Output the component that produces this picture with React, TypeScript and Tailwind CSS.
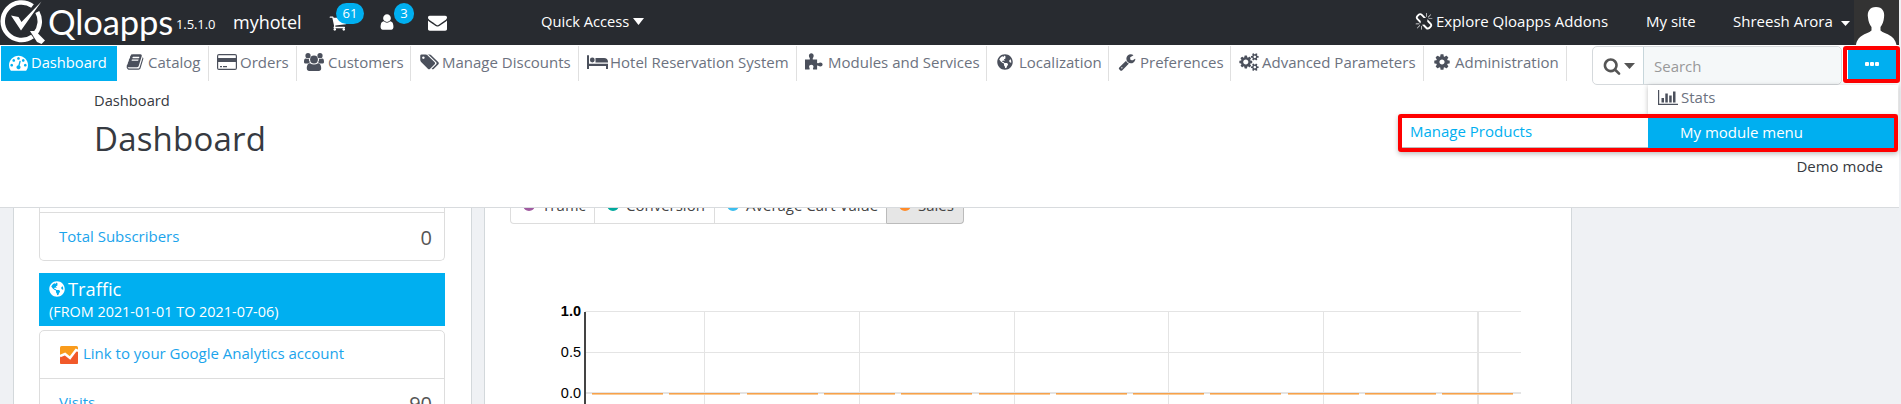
import React from "react";
import { FaGlobeAmericas } from "react-icons/fa";

const P = {
  dash: "M384 1152q0-53-37.5-90.5t-90.5-37.5-90.5 37.5-37.5 90.5 37.5 90.5 90.5 37.5 90.5-37.5 37.5-90.5zm192-448q0-53-37.5-90.5t-90.5-37.5-90.5 37.5-37.5 90.5 37.5 90.5 90.5 37.5 90.5-37.5 37.5-90.5zm428 481l101-382q6-26-7.5-48.5t-38.5-29.5-48 6.5-30 39.5l-101 382q-60 5-107 43.5t-63 98.5q-20 77 20 146t117 89 146-20 89-117q16-60-6-117t-72-91zm660-33q0-53-37.5-90.5t-90.5-37.5-90.5 37.5-37.5 90.5 37.5 90.5 90.5 37.5 90.5-37.5 37.5-90.5zm-640-640q0-53-37.5-90.5t-90.5-37.5-90.5 37.5-37.5 90.5 37.5 90.5 90.5 37.5 90.5-37.5 37.5-90.5zm448 192q0-53-37.5-90.5t-90.5-37.5-90.5 37.5-37.5 90.5 37.5 90.5 90.5 37.5 90.5-37.5 37.5-90.5zm320 448q0 261-141 483-19 29-54 29h-1402q-35 0-54-29-141-221-141-483 0-182 71-348t191-286 286-191 348-71 348 71 286 191 191 286 71 348z",
  book: "M1703 478q40 57 18 129l-275 906q-19 64-76.5 107.5t-122.5 43.5h-923q-77 0-148.5-53.5t-99.5-131.5q-24-67-2-127 0-4 3-27t4-37q1-8-3-21.5t-3-19.5q2-11 8-21t16.5-23.5 16.5-23.5q23-38 45-91.5t30-91.5q3-10 .5-30t-.5-28q3-11 17-28t17-23q21-36 42-92t25-90q1-9-2.5-32t.5-28q4-13 22-30.5t22-22.5q19-26 42.5-84.5t27.5-96.5q1-8-3-25.5t-2-26.5q2-8 9-18t18-23 17-21q8-12 16.5-30.5t15-35 16-36 19.5-32 26.5-23.5 36-11.5 47.5 5.5l-1 3q38-9 51-9h761q74 0 114 56t18 130l-274 906q-36 119-71.5 153.5t-128.5 34.5h-869q-27 0-38 15-11 16-1 43 24 70 144 70h923q29 0 56-15.5t35-41.5l300-987q7-22 5-57 38 15 59 43zm-1064 2q-4 13 2 22.5t20 9.5h608q13 0 25.5-9.5t16.5-22.5l21-64q4-13-2-22.5t-20-9.5h-608q-13 0-25.5 9.5t-16.5 22.5zm-83 256q-4 13 2 22.5t20 9.5h608q13 0 25.5-9.5t16.5-22.5l21-64q4-13-2-22.5t-20-9.5h-608q-13 0-25.5 9.5t-16.5 22.5z",
  cog: "M1152 896q0-106-75-181t-181-75-181 75-75 181 75 181 181 75 181-75 75-181zm512-109v222q0 12-8 23t-20 13l-185 28q-19 54-39 91 35 50 107 138 10 12 10 25t-9 23q-27 37-99 108t-94 71q-12 0-26-9l-138-108q-44 23-91 38-16 136-29 186-7 28-36 28h-222q-14 0-24.5-8.5t-11.5-21.5l-28-184q-49-16-90-37l-141 107q-10 9-25 9-14 0-25-11-126-114-165-168-7-10-7-23 0-12 8-23 15-21 51-66.5t54-70.5q-27-50-41-99l-183-27q-13-2-21-12.5t-8-23.5v-222q0-12 8-23t19-13l186-28q14-46 39-92-40-57-107-138-10-12-10-24 0-10 9-23 26-36 98.5-107.5t94.5-71.5q13 0 26 10l138 107q44-23 91-38 16-136 29-186 7-28 36-28h222q14 0 24.5 8.5t11.5 21.5l28 184q49 16 90 37l142-107q9-9 24-9 13 0 25 10 129 119 165 170 7 8 7 22 0 12-8 23-15 21-51 66.5t-54 70.5q26 50 41 98l183 28q13 2 21 12.5t8 23.5z",
  search: "M1216 832q0-185-131.5-316.5t-316.5-131.5-316.5 131.5-131.5 316.5 131.5 316.5 316.5 131.5 316.5-131.5 131.5-316.5zm512 832q0 52-38 90t-90 38q-54 0-90-38l-343-342q-179 124-399 124-143 0-273.5-55.5t-225-150-150-225-55.5-273.5 55.5-273.5 150-225 225-150 273.5-55.5 273.5 55.5 225 150 150 225 55.5 273.5q0 220-124 399l343 343q37 37 37 90z",
  user: "M1536 1399q0 109-62.5 187t-150.5 78h-854q-88 0-150.5-78t-62.5-187q0-85 8.5-160.5t31.5-152 58.5-131 94-89 134.5-34.5q131 128 313 128t313-128q76 0 134.5 34.5t94 89 58.5 131 31.5 152 8.5 160.5zm-256-887q0 159-112.5 271.5t-271.5 112.5-271.5-112.5-112.5-271.5 112.5-271.5 271.5-112.5 271.5 112.5 112.5 271.5z",
  mail: "M1792 710v794q0 66-47 113t-113 47h-1472q-66 0-113-47t-47-113v-794q44 49 101 87 362 246 497 345 57 42 92.5 65.5t94.5 48 110 24.5h2q51 0 110-24.5t94.5-48 92.5-65.5q170-123 498-345 57-39 100-87zm0-294q0 79-49 151t-122 123q-376 261-468 325-10 7-42.5 31t-54 38.5-52 32.5-57.5 27-50 9h-2q-23 0-50-9t-57.5-27-52-32.5-54-38.5-42.5-31q-91-64-262-182.5t-205-142.5q-62-42-117-115.5t-55-136.5q0-78 41.5-130t118.5-52h1472q65 0 112.5 47t47.5 113z",
  cart: "M704 1536q0 52-38 90t-90 38-90-38-38-90 38-90 90-38 90 38 38 90zm896 0q0 52-38 90t-90 38-90-38-38-90 38-90 90-38 90 38 38 90zm128-1088v512q0 24-16.5 42.5t-40.5 21.5l-1044 122q13 60 13 70 0 16-24 64h920q26 0 45 19t19 45-19 45-45 19h-1024q-26 0-45-19t-19-45q0-11 8-31.5t16-36 21.5-40 15.5-29.5l-177-823h-204q-26 0-45-19t-19-45 19-45 45-19h256q16 0 28.5 6.5t19.5 15.5 13 24.5 8 26 5.5 29.5 4.5 26h1201q26 0 45 19t19 45z",
  wrench: "M448 1472q0-26-19-45t-45-19-45 19-19 45 19 45 45 19 45-19 19-45zm644-420l-682 682q-37 37-90 37-52 0-91-37l-106-108q-38-36-38-90 0-53 38-91l681-681q39 98 114.5 173.5t173.5 114.5zm634-435q0 39-23 106-47 134-164.5 217.5t-258.5 83.5q-185 0-316.5-131.5t-131.5-316.5 131.5-316.5 316.5-131.5q58 0 121.5 16.5t107.5 46.5q16 11 16 28t-16 28l-293 169v224l193 107q5-3 79-48.5t135.5-81 70.5-35.5q15 0 23.5 10t8.5 25z",
  unlink: "M503 1271l-256 256q-10 9-23 9-12 0-23-9-9-10-9-23t9-23l256-256q10-9 23-9t23 9q9 10 9 23t-9 23zm169 41v320q0 14-9 23t-23 9-23-9-9-23v-320q0-14 9-23t23-9 23 9 9 23zm-224-224q0 14-9 23t-23 9h-320q-14 0-23-9t-9-23 9-23 23-9h320q14 0 23 9t9 23zm1264 128q0 120-85 203l-147 146q-83 83-203 83-121 0-204-85l-334-335q-21-21-42-56l239-18 273 274q27 27 68 27.5t68-26.5l147-146q28-28 28-67 0-40-28-68l-274-275 18-239q35 21 56 42l336 336q84 86 84 204zm-617-724l-239 18-273-274q-28-28-68-28-39 0-68 27l-147 146q-28 28-28 67 0 40 28 68l274 274-18 240q-35-21-56-42l-336-336q-84-86-84-204 0-120 85-203l147-146q83-83 203-83 121 0 204 85l334 335q21 21 42 56zm633 84q0 14-9 23t-23 9h-320q-14 0-23-9t-9-23 9-23 23-9h320q14 0 23 9t9 23zm-544-544v320q0 14-9 23t-23 9-23-9-9-23v-320q0-14 9-23t23-9 23 9 9 23zm407 151l-256 256q-11 9-23 9t-23-9q-9-10-9-23t9-23l256-256q10-9 23-9t23 9q9 10 9 23t-9 23z",
  tags: "M576 448q0-53-37.5-90.5t-90.5-37.5-90.5 37.5-37.5 90.5 37.5 90.5 90.5 37.5 90.5-37.5 37.5-90.5zm1067 576q0 53-37 90l-491 492q-39 37-91 37-53 0-90-37l-715-716q-38-37-64.5-101t-26.5-117v-416q0-52 38-90t90-38h416q53 0 117 26.5t102 64.5l715 714q37 39 37 91zm384 0q0 53-37 90l-491 492q-39 37-91 37-36 0-59-14t-53-45l470-470q37-37 37-90 0-52-37-91l-715-714q-38-38-102-64.5t-117-26.5h224q53 0 117 26.5t102 64.5l715 714q37 39 37 91z",
  cogs: "M896 896q0-106-75-181t-181-75-181 75-75 181 75 181 181 75 181-75 75-181zm768 512q0-52-38-90t-90-38-90 38-38 90q0 53 37.5 90.5t90.5 37.5 90.5-37.5 37.5-90.5zm0-1024q0-52-38-90t-90-38-90 38-38 90q0 53 37.5 90.5t90.5 37.5 90.5-37.5 37.5-90.5zm-384 421v185q0 10-7 19.5t-16 10.5l-155 24q-11 35-32 76 34 48 90 115 7 11 7 20 0 12-7 19-23 30-82.5 89.5t-78.5 59.5q-11 0-21-7l-115-90q-37 19-77 31-11 108-23 155-7 24-30 24h-186q-11 0-20-7.5t-10-17.5l-23-153q-34-10-75-31l-118 89q-7 7-20 7-11 0-21-8-144-133-144-160 0-9 7-19 10-14 41-53t47-61q-23-44-35-82l-152-24q-10-1-17-9.5t-7-19.5v-185q0-10 7-19.5t16-10.5l155-24q11-35 32-76-34-48-90-115-7-11-7-20 0-12 7-20 22-30 82-89t79-59q11 0 21 7l115 90q34-18 77-32 11-108 23-154 7-24 30-24h186q11 0 20 7.5t10 17.5l23 153q34 10 75 31l118-89q8-7 20-7 11 0 21 8 144 133 144 160 0 8-7 19-12 16-42 54t-45 60q23 48 34 82l152 23q10 2 17 10.5t7 19.5zm640 533v140q0 16-149 31-12 27-30 52 51 113 51 138 0 4-4 7-122 71-124 71-8 0-46-47t-52-68q-20 2-30 2t-30-2q-14 21-52 68t-46 47q-2 0-124-71-4-3-4-7 0-25 51-138-18-25-30-52-149-15-149-31v-140q0-16 149-31 13-29 30-52-51-113-51-138 0-4 4-7 4-2 35-20t59-34 30-16q8 0 46 46.5t52 67.5q20-2 30-2t30 2q51-71 92-112l6-2q4 0 124 70 4 3 4 7 0 25-51 138 17 23 30 52 149 15 149 31zm0-1024v140q0 16-149 31-12 27-30 52 51 113 51 138 0 4-4 7-122 71-124 71-8 0-46-47t-52-68q-20 2-30 2t-30-2q-14 21-52 68t-46 47q-2 0-124-71-4-3-4-7 0-25 51-138-18-25-30-52-149-15-149-31v-140q0-16 149-31 13-29 30-52-51-113-51-138 0-4 4-7 4-2 35-20t59-34 30-16q8 0 46 46.5t52 67.5q20-2 30-2t30 2q51-71 92-112l6-2q4 0 124 70 4 3 4 7 0 25-51 138 17 23 30 52 149 15 149 31z",
};

function Icon({ d, className, box = "0 0 1792 1792" }: { d: string; className: string; box?: string }) {
  return (
    <svg viewBox={box} fill="currentColor" className={className}>
      <path d={d} />
    </svg>
  );
}

const CardIcon = () => (
  <svg viewBox="0 0 20 16" className="h-4 w-5" fill="currentColor">
    <path fillRule="evenodd" d="M2 0h16a2 2 0 0 1 2 2v12a2 2 0 0 1-2 2H2a2 2 0 0 1-2-2V2a2 2 0 0 1 2-2zM1.2 1.8V4h17.6V1.8a.6.6 0 0 0-.6-.6H1.8a.6.6 0 0 0-.6.6zM1.2 8v6.2c0 .3.3.6.6.6h16.4c.3 0 .6-.3.6-.6V8zM3 12h2v1.200H3zM6 12h4v1.200H6z" />
  </svg>
);
const GroupIcon = () => (
  <svg viewBox="0 0 20 18" className="h-[18px] w-5" fill="currentColor">
    <circle cx="4" cy="2.7" r="2.6" />
    <circle cx="16" cy="2.7" r="2.6" />
    <circle cx="10" cy="6.5" r="3.9" />
    <path d="M1.800 5.500C.3 5.500 0 7.300 0 9c0 1 .8 1.500 1.800 1.500h2.400C5 9.800 5.600 9.300 6 9.200 5 8 4.800 6.800 5 5.700c-1.200.4-2.200.2-3.200-.2zM18.200 5.500c1.500 0 1.800 1.800 1.800 3.500 0 1-.8 1.500-1.800 1.500h-2.400c-.8-.7-1.400-1.200-1.800-1.300 1-1.200 1.200-2.400 1-3.500 1.200.4 2.200.2 3.200-.2zM6 10.200c2.500 1.800 5.500 1.800 8 0 2.300 0 3.200 2.500 3.200 5.300 0 1.500-1 2.500-2.400 2.500H5.200c-1.400 0-2.400-1-2.400-2.500 0-2.800.9-5.300 3.200-5.300z" />
  </svg>
);
const BedIcon = () => (
  <svg viewBox="0 0 21 14" className="h-[14px] w-[21px] shrink-0" fill="currentColor">
    <path d="M0 1a1 1 0 0 1 2 0v7.700h19V14h-2v-3H2v3H0zM8.500 3H17c2.500 0 4 1.500 4 4v.5H8.500z" />
    <circle cx="5.3" cy="5" r="2.400" />
  </svg>
);
const PuzzleIcon = () => (
  <svg viewBox="0 0 18 17" className="h-[17px] w-[18px]" fill="currentColor">
    <path d="M0 6.500h4.800c.6-1.200-.9-1.800-.9-3.700C3.900 1.200 5 .2 6.300.2s2.400 1 2.400 2.600c0 1.900-1.500 2.500-.9 3.700h4.300v3.600c1.200.6 1.500-.7 3.200-.7 1.300 0 2.300.8 2.300 2s-1 2-2.300 2c-1.700 0-2-1.300-3.200-.7v3.900H8.300c-.9-1.100.2-1.600.2-2.900 0-1.100-.9-1.900-2.200-1.900s-2.200.8-2.200 1.900c0 1.300 1.100 1.800.4 2.900H0z" />
  </svg>
);
const StatsIcon = () => (
  <svg viewBox="0 0 20 15" className="h-[15px] w-5" fill="currentColor">
    <path d="M0 0h1.200v13.800H20V15H0zM3.500 8H6v4.500H3.500zM7.300 3.500h2.500v9H7.300zM11.200 5.500h2.500v7h-2.500zM15 1.500h2.500v11H15z" />
  </svg>
);

function Logo() {
  return (
    <svg viewBox="0 0 46 45" className="h-[45px] w-[46px] shrink-0" fill="none">
      <path d="M32.500 6A18.800 18.800 0 1 0 32.500 36.500M37.300 12a18.800 18.800 0 0 1-2 21.500" stroke="#fff" strokeWidth="4.500" />
      <path d="M30 31h5.500L45 40.500 41.500 44 37 42z" fill="#fff" />
      <path d="M11 15.500l7.500 1.500 3 5L41.500 1.500 21 30.500z" fill="#fff" />
    </svg>
  );
}

const Caret = ({ className }: { className: string }) => (
  <svg viewBox="0 0 10 6" preserveAspectRatio="none" fill="currentColor" className={className}>
    <path d="M0 0h10L5 6z" />
  </svg>
);

const tabs = [
  { label: "Catalog", w: "w-[92px]", pad: "pl-[9px]", slot: "w-[22px]", icon: <Icon d={P.book} className="size-[18px]" /> },
  { label: "Orders", w: "w-[88px]", pad: "pl-2", slot: "w-[23px]", icon: <CardIcon /> },
  { label: "Customers", w: "w-[114px]", pad: "pl-[7px]", slot: "w-6", icon: <GroupIcon /> },
  { label: "Manage Discounts", w: "w-[168px]", pad: "pl-2", slot: "w-[23px]", icon: <Icon d={P.tags} box="0 0 2048 1792" className="h-[18px] w-[20px]" /> },
  { label: "Hotel Reservation System", w: "w-[218px]", pad: "pl-2", slot: "w-[23px]", icon: <BedIcon /> },
  { label: "Modules and Services", w: "w-[190px]", pad: "pl-2", slot: "w-[23px]", icon: <PuzzleIcon /> },
  { label: "Localization", w: "w-[122px]", pad: "pl-2.5", slot: "w-[22px]", icon: <FaGlobeAmericas className="size-4" /> },
  { label: "Preferences", w: "w-[122px]", pad: "pl-[9px]", slot: "w-[22px]", icon: <Icon d={P.wrench} className="size-[18px]" /> },
  { label: "Advanced Parameters", w: "w-[193px]", pad: "pl-2", slot: "w-[23px]", icon: <Icon d={P.cogs} box="0 0 1920 1792" className="h-[18px] w-[20px]" /> },
  { label: "Administration", w: "w-[143px]", pad: "pl-[9px]", slot: "w-[22px]", icon: <Icon d={P.cog} className="size-[18px]" /> },
];

function TopBar() {
  return (
    <header className="flex h-[45px] w-[1899px] bg-[#282b30] text-[15px] text-white">
      <Logo />
      <span className="w-[129px] shrink-0 pl-[2px] font-['Lato'] text-[34.5px] leading-[43px] tracking-[-0.1px]">Qloapps</span>
      <span className="w-[58px] shrink-0 pl-px text-[13px] leading-[43px] tracking-[-0.1px]"><span className="inline-block pt-[3px]">1.5.1.0</span></span>
      <span className="w-[96px] shrink-0 text-[18px] leading-[44px]">myhotel</span>
      <div className="relative w-[49px] shrink-0 pt-[14px]">
        <Icon d={P.cart} className="size-[18px]" />
        <span className="absolute top-[3px] left-[7px] flex h-[21px] w-7 items-center justify-center rounded-full bg-[#00aff0] text-[13px]">61</span>
      </div>
      <div className="relative w-[50px] shrink-0 pt-[13px]">
        <Icon d={P.user} className="size-[18px]" />
        <span className="absolute top-[3px] left-4 flex h-[21px] w-5 items-center justify-center rounded-full bg-[#00aff0] text-[13px]">3</span>
      </div>
      <div className="w-[113px] shrink-0 pt-[13px]">
        <Icon d={P.mail} className="size-[19px]" />
      </div>
      <div className="flex h-[43px] w-[874px] shrink-0 items-center gap-1 text-[14.7px]">
        Quick Access
        <Caret className="h-[7px] w-[11px]" />
      </div>
      <div className="flex h-[43px] w-[231px] shrink-0 items-center gap-[3px] whitespace-nowrap">
        <Icon d={P.unlink} className="size-[18px] shrink-0" />
        Explore Qloapps Addons
      </div>
      <span className="w-[87px] shrink-0 leading-[43px]">My site</span>
      <div className="flex h-[43px] w-[121px] shrink-0 items-center gap-2 whitespace-nowrap">
        Shreesh Arora
        <Caret className="mt-1 h-[5px] w-[9px]" />
      </div>
      <svg viewBox="0 0 45 45" className="size-[45px] shrink-0 bg-[#333]">
        <path d="M22 7c6.500 0 9 5 8 10.500-.3 4-1.500 7-3.500 9.500v3.500c3.500 3.500 14 3.500 16 14.500H2c2-11 12-11 15.500-14.500V27c-2-2.500-3.200-5.500-3.500-9.500C13 12 15.500 7 22 7z" fill="#fff" />
      </svg>
    </header>
  );
}

function Nav() {
  return (
    <nav className="flex h-[36px] items-start pt-px pl-px text-[15px] text-[#6c7280]">
      <div className="flex h-[35px] w-[116px] shrink-0 items-center bg-[#00aff0] pb-0.5 pl-2 text-white">
        <span className="w-[22px]"><Icon d={P.dash} className="size-[19px]" /></span>
        <span className="text-[14.7px] font-medium">Dashboard</span>
      </div>
      {tabs.map((t) => (
        <div key={t.label} className={`flex h-[35px] shrink-0 items-center border-r border-[#e0e0e0] pb-0.5 ${t.w} ${t.pad}`}>
          <span className={`flex shrink-0 pb-0.5 text-[#4b505c] ${t.slot}`}>{t.icon}</span>
          <span className="whitespace-nowrap">{t.label}</span>
        </div>
      ))}
      <div className="ml-[25px] flex h-[39px] w-[250px] shrink-0 rounded-[5px] border border-[#d5d9dc] bg-white">
        <div className="flex w-[51px] shrink-0 items-center gap-[3px] border-r border-[#c7d6db] pl-2.5 text-[#555]">
          <Icon d={P.search} className="size-[18px]" />
          <Caret className="h-1.5 w-[11px]" />
        </div>
        <span className="flex grow items-center rounded-r-[5px] bg-[#f5f8f9] pt-0.5 pl-2.5 text-[15px] text-[#999]">Search</span>
      </div>
      <div className="ml-px h-[37px] w-[57px] shrink-0 rounded-[3px] border-4 border-[#f00]">
        <div className="flex h-full items-center justify-center gap-px border-l border-white bg-[#00aff0] pb-px">
          {[0, 1, 2].map((i) => (
            <i key={i} className="h-1 w-[4px] rounded-[1px] bg-white" />
          ))}
        </div>
      </div>
    </nav>
  );
}

function MoreMenu() {
  return (
    <div className="absolute top-[85px] left-[1398px] flex w-[500px] flex-col items-end text-[15px]">
      <div className="flex h-[29px] w-[250px] items-center gap-[3px] bg-white pb-1 pl-2.5 text-[#6c7280] shadow-[0_1px_5px_rgba(0,0,0,0.25)]">
        <span className="text-[#4b505c]"><StatsIcon /></span>
        Stats
      </div>
      <div className="flex h-[38px] w-full rounded-[3px] border-4 border-[#f00] bg-white shadow-[0_2px_5px_rgba(0,0,0,0.25)]">
        <div className="flex w-[246px] shrink-0 items-center border-b border-[#bbb] pb-0.5 pl-2 text-[#00aff0]">Manage Products</div>
        <div className="flex grow items-center bg-[#00aff0] pb-0.5 pl-8 font-medium text-white">My module menu</div>
      </div>
    </div>
  );
}

function StatRow({ label, value, className }: { label: string; value: string; className: string }) {
  return (
    <div className={`flex justify-between border-[#ddd] pr-3 pl-[19px] ${className}`}>
      <span className="text-[15px] leading-[47px] text-[#1ba4ec]">{label}</span>
      <span className="text-[20px] leading-[50px] text-[#555]">{value}</span>
    </div>
  );
}

function Sidebar() {
  return (
    <aside className="h-[196px] w-[459px] shrink-0 overflow-hidden border-x border-[#d3d8db] bg-white pr-[26px] pl-[25px]">
      <div className="h-[53px] rounded-b-[5px] border border-t-0 border-[#ddd] pt-1">
        <StatRow label="Total Subscribers" value="0" className="h-[48px] border-t" />
      </div>
      <div className="mt-3 h-[53px] bg-[#00aff0] pt-[3px] pl-2.5 text-white">
        <div className="flex items-center gap-[3px] text-[18.3px] leading-[26px]">
          <FaGlobeAmericas className="size-4" />
          Traffic
        </div>
        <div className="text-[14.4px] leading-5">(FROM 2021-01-01 TO 2021-07-06)</div>
      </div>
      <div className="mt-1 h-[120px] rounded-t-[5px] border border-[#ddd]">
        <div className="flex h-[48px] items-center gap-[5px] border-b border-[#ddd] pb-0.5 pl-5 text-[15px] text-[#1ba4ec]">
          <svg viewBox="0 0 18 18" className="mt-0.5 size-[18px]">
            <rect width="18" height="18" rx="1.5" fill="#f99b1c" />
            <path d="M0 10l5-3 5 5 6-8 2 2v10.500a1.500 1.500 0 0 1-1.500 1.500h-15A1.500 1.500 0 0 1 0 16.500z" fill="#f1592a" />
            <path d="M0 10l5-2 5 4 6-8 2 1" fill="none" stroke="#fff" strokeWidth="2.5" />
          </svg>
          Link to your Google Analytics account
        </div>
        <StatRow label="Visits" value="90" className="h-[49px]" />
      </div>
    </aside>
  );
}

const legend = [
  { label: "Traffic", w: "w-[85px]", dot: "bg-[#a05aa0]", box: "pl-[12px] rounded-bl-[4px] border-l border-[#ddd]" },
  { label: "Conversion", w: "w-[120px]", dot: "bg-[#00a99d]", box: "pl-3 border-[#ddd]" },
  { label: "Average Cart Value", w: "w-[172px]", dot: "bg-[#3cbeee]", box: "pl-3 border-b-[#ddd] border-r-[#bbb]" },
  { label: "Sales", w: "w-[77px]", dot: "bg-[#ff8c2b]", box: "pl-3 rounded-br-[4px] border-[#bbb] bg-[#e6e6e6]" },
];

function Chart() {
  const vertical = [219, 374, 529, 683, 838];
  const bars = Array.from({ length: 12 }, (_, i) => Math.round(107 + i * 77.3));
  return (
    <section className="h-[196px] w-[1088px] shrink-0 overflow-hidden border-x border-[#d3d8db] bg-white">
      <div className="flex h-[16px] items-end overflow-hidden pl-[25px]">
        {legend.map((l) => (
          <div key={l.label} className={`flex h-[34px] shrink-0 items-center gap-[7px] border-r border-b pb-[3px] text-[15px] text-[#444] ${l.w} ${l.box}`}>
            <span className={`size-3 shrink-0 rounded-full ${l.dot}`} />
            <span className="whitespace-nowrap">{l.label}</span>
          </div>
        ))}
      </div>
      <svg viewBox="0 0 1086 180" className="h-[180px] w-[1086px]" shapeRendering="crispEdges">
        <g fill="#e4e4e4">
          <rect x="100" y="87" width="936" height="1" />
          <rect x="100" y="128" width="936" height="1" />
          <rect x="100" y="168" width="936" height="2" />
          <rect x="992" y="87" width="2" height="93" />
        </g>
        {vertical.map((x) => (
          <rect key={x} x={x} y="87" width="1" height="93" fill="#e4e4e4" />
        ))}
        <rect x="99" y="88" width="2" height="92" fill="#444" />
        {bars.map((x) => (
          <g key={x}>
            <rect x={x} y="169" width="71" height="1" fill="#f7a14b" />
            <rect x={x} y="170" width="71" height="1" fill="#facb95" />
          </g>
        ))}
        <g fontFamily="Liberation Sans" fontSize="14.5" textAnchor="end" fill="#000">
          <text x="96" y="92" fontWeight="700">1.0</text>
          <text x="96" y="133">0.5</text>
          <text x="96" y="174">0.0</text>
        </g>
      </svg>
    </section>
  );
}

export default function App() {
  return (
    <div className="relative h-[404px] w-[1901px] overflow-hidden bg-[#eff1f4] font-['Open_Sans',sans-serif]">
      <div className="h-[208px] w-[1899px] border-b border-[#d8dbde] bg-white">
        <TopBar />
        <Nav />
        <div className="flex items-start justify-between pt-[9px] pr-4 pl-[94px] text-[#363a41]">
          <div>
            <div className="text-[14.7px] leading-[21px]">Dashboard</div>
            <h1 className="pt-[6px] text-[33px] leading-[44px] tracking-[0.2px]">Dashboard</h1>
          </div>
          <div className="pt-[66px] text-[15px] leading-[21px]">Demo mode</div>
        </div>
      </div>
      <main className="flex gap-3 pl-[13px]">
        <Sidebar />
        <Chart />
      </main>
      <MoreMenu />
    </div>
  );
}
